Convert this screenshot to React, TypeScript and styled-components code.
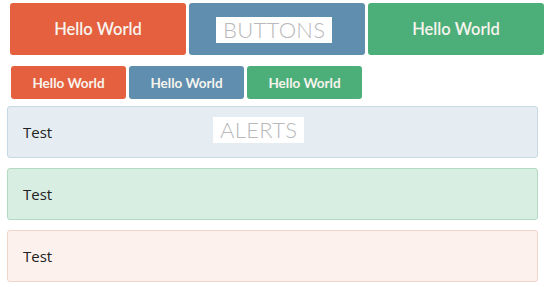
import React from 'react';
import styled, { createGlobalStyle } from 'styled-components';

const GlobalStyle = createGlobalStyle`
  body {
    margin: 0;
    background: #ffffff;
    font-family: Lato, "Open Sans", "Liberation Sans", sans-serif;
  }
`;

const colors: Record<string, string> = {
  orange: '#e5603e',
  blue: '#5f8eae',
  green: '#4caf7a',
};

const alertColors: Record<string, { bg: string; border: string }> = {
  info: { bg: '#e5edf2', border: '#c7d8e3' },
  success: { bg: '#d9eee2', border: '#b3dbc4' },
  danger: { bg: '#fdf1ed', border: '#f4d3c9' },
};

const Page = styled.div`
  width: 547px;
  height: 287px;
  box-sizing: border-box;
  padding-top: 3px;
`;

const Section = styled.section`
  position: relative;
`;

const BigRow = styled.div`
  display: flex;
  gap: 3px;
  padding: 0 3px 0 10px;
`;

const SmallRow = styled.div`
  display: flex;
  gap: 3px;
  padding-left: 11px;
  margin-top: 11px;
`;

const Button = styled.button<{ $tone: string; $small?: boolean }>`
  border: none;
  border-radius: 3px;
  background: ${(p) => colors[p.$tone]};
  color: #f7f4ee;
  font-family: inherit;
  cursor: pointer;
  width: ${(p) => (p.$small ? '115px' : '176px')};
  height: ${(p) => (p.$small ? '33px' : '52px')};
  font-size: ${(p) => (p.$small ? '13.5px' : '16.5px')};
  font-weight: ${(p) => (p.$small ? 700 : 600)};
  padding: 0;
`;

const Label = styled.span<{ $left: number; $top: number }>`
  position: absolute;
  left: ${(p) => p.$left}px;
  top: ${(p) => p.$top}px;
  background: #ffffff;
  color: #b9b9b9;
  font-weight: 300;
  font-size: 22px;
  line-height: 26px;
  padding: 0 7px;
  letter-spacing: 0.3px;
`;

const Alerts = styled.div`
  display: flex;
  flex-direction: column;
  gap: 10px;
  padding: 7px 9px 0 7px;
`;

const Alert = styled.div<{ $kind: string }>`
  height: 52px;
  box-sizing: border-box;
  border: 1px solid ${(p) => alertColors[p.$kind].border};
  background: ${(p) => alertColors[p.$kind].bg};
  border-radius: 3px;
  display: flex;
  align-items: center;
  padding-left: 15px;
  color: #222;
  font-size: 15px;
  font-family: "Open Sans", Lato, sans-serif;
`;

const tones = ['orange', 'blue', 'green'];

export default function App() {
  return (
    <Page>
      <GlobalStyle />
      <Section>
        <BigRow>
          {tones.map((t) => (
            <Button key={t} $tone={t}>
              {t === 'blue' ? '' : 'Hello World'}
            </Button>
          ))}
        </BigRow>
        <Label $left={216} $top={14}>BUTTONS</Label>
        <SmallRow>
          {tones.map((t) => (
            <Button key={t} $tone={t} $small>
              Hello World
            </Button>
          ))}
        </SmallRow>
      </Section>
      <Section>
        <Alerts>
          <Alert $kind="info">Test</Alert>
          <Alert $kind="success">Test</Alert>
          <Alert $kind="danger">Test</Alert>
        </Alerts>
        <Label $left={213} $top={18}>ALERTS</Label>
      </Section>
    </Page>
  );
}
